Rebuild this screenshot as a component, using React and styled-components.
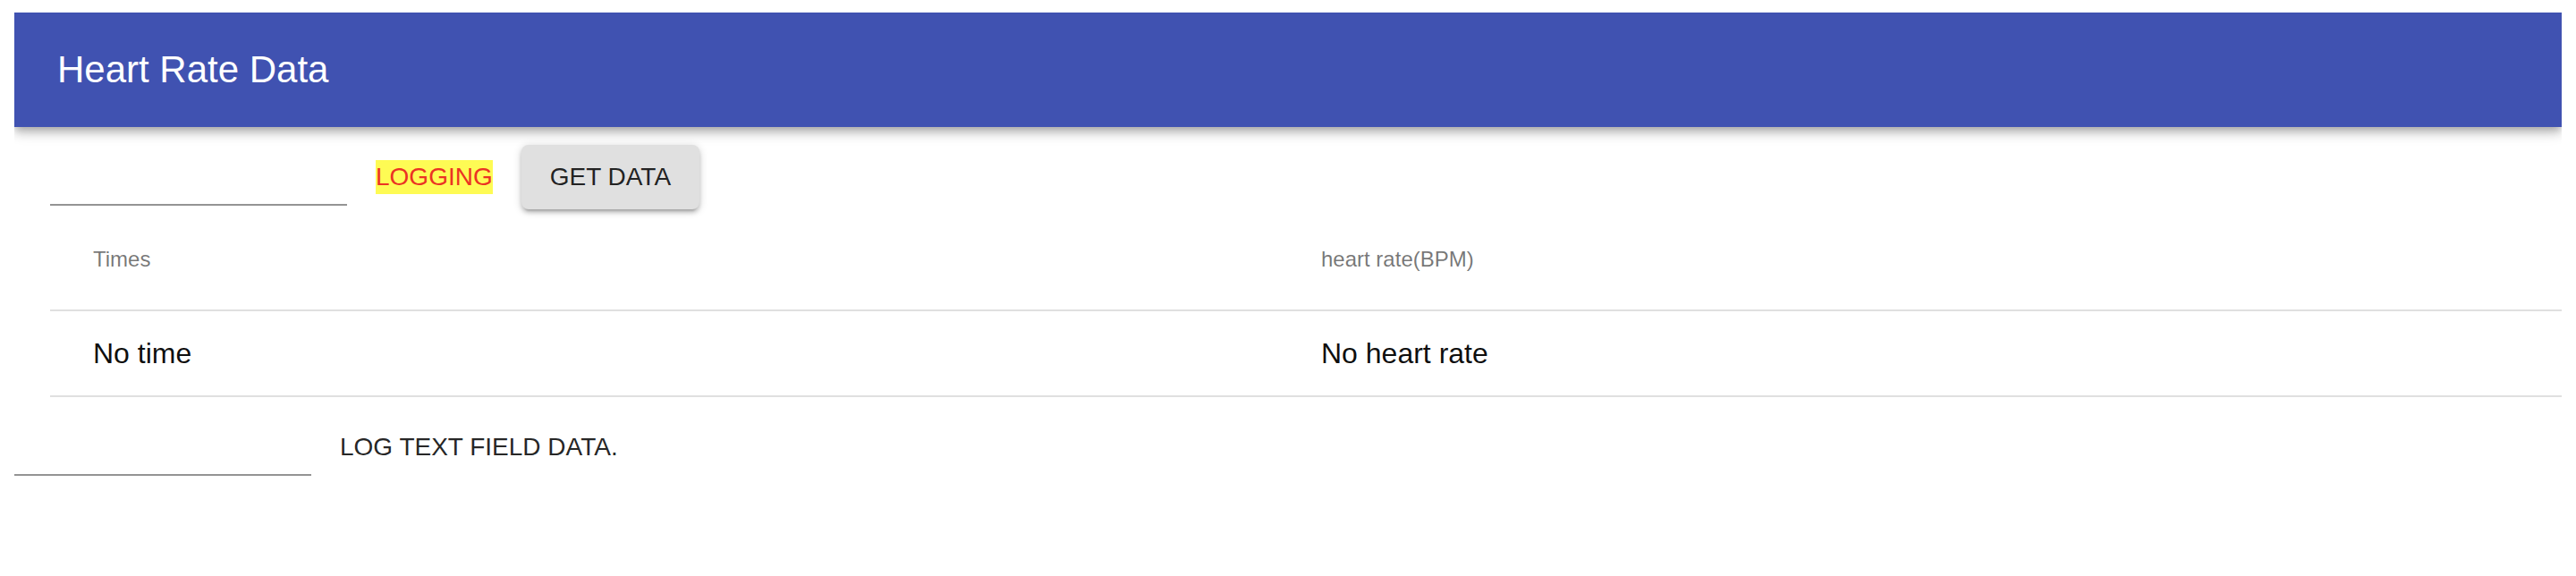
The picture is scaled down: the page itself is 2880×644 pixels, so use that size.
import React from "react";
import styled, { createGlobalStyle } from "styled-components";

const GlobalStyle = createGlobalStyle`
  body {
    margin: 14px 16px 16px;
    background: #fff;
    font-family: "Liberation Sans", Arial, sans-serif;
  }
`;

const AppBar = styled.header`
  height: 128px;
  background-color: #4052b1;
  display: flex;
  align-items: center;
  padding: 0 48px;
  box-shadow: 0px 4px 8px -2px rgba(0, 0, 0, 0.2),
    0px 8px 10px 0px rgba(0, 0, 0, 0.14), 0px 2px 20px 0px rgba(0, 0, 0, 0.12);
  position: relative;
  z-index: 1;
`;

const Title = styled.h1`
  margin: 0;
  color: #fff;
  font-size: 42px;
  font-weight: 400;
  line-height: 1;
`;

const Row = styled.div`
  display: flex;
  align-items: center;
  height: 72px;
  margin-top: 20px;
  padding-left: ${(p) => p.$indent || 0}px;
  gap: ${(p) => p.$gap || 0}px;
`;

const TextField = styled.input`
  width: 332px;
  height: 40px;
  box-sizing: border-box;
  border: none;
  border-bottom: 2px solid #949494;
  align-self: flex-end;
  margin: 0 0 4px;
  padding: 0;
  font-size: 32px;
  font-family: inherit;
  outline: none;
  background: transparent;
`;

const Status = styled.span`
  background: #fefb54;
  color: #eb3323;
  font-size: 28px;
  line-height: 38px;
  height: 38px;
`;

const Button = styled.button`
  height: 72px;
  min-width: 128px;
  padding: 0 32px;
  border: none;
  border-radius: 8px;
  font-family: inherit;
  font-size: 28px;
  color: rgba(0, 0, 0, 0.87);
  background: ${(p) => (p.$raised ? "#e0e0e0" : "transparent")};
  box-shadow: ${(p) =>
    p.$raised
      ? "0px 2px 10px 0px rgba(0,0,0,0.2), 0px 4px 4px 0px rgba(0,0,0,0.14), 0px 6px 2px -4px rgba(0,0,0,0.12)"
      : "none"};
  cursor: pointer;
`;

const Table = styled.div`
  margin-left: 40px;
  display: grid;
  grid-template-columns: 1373px 1fr;
`;

const Cell = styled.div`
  display: flex;
  align-items: center;
  height: ${(p) => (p.$head ? 112 : 94)}px;
  padding-left: 48px;
  border-bottom: 2px solid #e0e0e0;
  font-size: ${(p) => (p.$head ? 24 : 32)}px;
  color: ${(p) => (p.$head ? "rgba(0,0,0,0.54)" : "rgba(0,0,0,0.95)")};
`;

export default function App() {
  return (
    <>
      <GlobalStyle />
      <AppBar>
        <Title>Heart Rate Data</Title>
      </AppBar>
      <Row $indent={40} $gap={32}>
        <TextField />
        <Status>LOGGING</Status>
        <Button $raised>GET DATA</Button>
      </Row>
      <Table>
        <Cell $head>Times</Cell>
        <Cell $head>heart rate(BPM)</Cell>
        <Cell>No time</Cell>
        <Cell>No heart rate</Cell>
      </Table>
      <Row>
        <TextField />
        <Button>LOG TEXT FIELD DATA.</Button>
      </Row>
    </>
  );
}
